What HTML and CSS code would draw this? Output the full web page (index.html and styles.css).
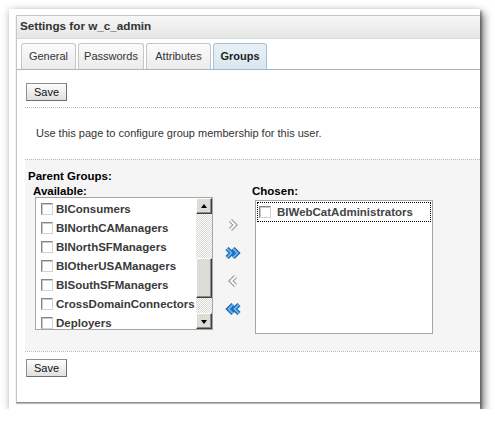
FILE: index.html
```html
<!DOCTYPE html>
<html>
<head>
<meta charset="utf-8">
<title>Settings for w_c_admin</title>
<link rel="stylesheet" href="styles.css">
</head>
<body>
<div class="frame">
  <div class="panel">
    <div class="header">Settings for w_c_admin</div>
    <div class="tabbar">
      <div class="tab tab-general">General</div>
      <div class="tab tab-passwords">Passwords</div>
      <div class="tab tab-attributes">Attributes</div>
      <div class="tab tab-groups selected">Groups</div>
    </div>
    <div class="content">
      <div class="toolbar"><button class="btn">Save</button></div>
      <div class="info">Use this page to configure group membership for this user.</div>
      <div class="groups">
        <div class="section-label">Parent Groups:</div>
        <div class="shuttle">
          <div class="col col-avail">
            <div class="col-label">Available:</div>
            <div class="listbox avail">
              <div class="items">
                <div class="item"><span class="cb"></span>BIConsumers</div>
                <div class="item"><span class="cb"></span>BINorthCAManagers</div>
                <div class="item"><span class="cb"></span>BINorthSFManagers</div>
                <div class="item"><span class="cb"></span>BIOtherUSAManagers</div>
                <div class="item"><span class="cb"></span>BISouthSFManagers</div>
                <div class="item"><span class="cb"></span>CrossDomainConnectors</div>
                <div class="item"><span class="cb"></span>Deployers</div>
              </div>
              <div class="scrollbar">
                <div class="sb-btn"><span class="tri-up"></span></div>
                <div class="sb-track"><div class="sb-thumb"></div></div>
                <div class="sb-btn"><span class="tri-down"></span></div>
              </div>
            </div>
          </div>
          <div class="arrows">
            <svg class="arrow" width="12" height="14" viewBox="0 0 12 14">
              <polyline points="3.5,2.5 8,7 3.5,11.5" fill="none" stroke="#9c9c9c" stroke-width="4.2"/>
              <polyline points="3.5,2.5 8,7 3.5,11.5" fill="none" stroke="#ffffff" stroke-width="1.8"/>
            </svg>
            <svg class="arrow" width="18" height="14" viewBox="0 0 18 14">
              <polyline points="3,2.5 7.5,7 3,11.5" fill="none" stroke="#1d5ea6" stroke-width="4.4"/>
              <polyline points="3,2.5 7.5,7 3,11.5" fill="none" stroke="#5fb4f6" stroke-width="2"/>
              <polyline points="9,2.5 13.5,7 9,11.5" fill="none" stroke="#1d5ea6" stroke-width="4.4"/>
              <polyline points="9,2.5 13.5,7 9,11.5" fill="none" stroke="#5fb4f6" stroke-width="2"/>
            </svg>
            <svg class="arrow" width="12" height="14" viewBox="0 0 12 14">
              <polyline points="8.5,2.5 4,7 8.5,11.5" fill="none" stroke="#9c9c9c" stroke-width="4.2"/>
              <polyline points="8.5,2.5 4,7 8.5,11.5" fill="none" stroke="#ffffff" stroke-width="1.8"/>
            </svg>
            <svg class="arrow" width="18" height="14" viewBox="0 0 18 14">
              <polyline points="15,2.5 10.5,7 15,11.5" fill="none" stroke="#1d5ea6" stroke-width="4.4"/>
              <polyline points="15,2.5 10.5,7 15,11.5" fill="none" stroke="#5fb4f6" stroke-width="2"/>
              <polyline points="9,2.5 4.5,7 9,11.5" fill="none" stroke="#1d5ea6" stroke-width="4.4"/>
              <polyline points="9,2.5 4.5,7 9,11.5" fill="none" stroke="#5fb4f6" stroke-width="2"/>
            </svg>
          </div>
          <div class="col col-chosen">
            <div class="col-label">Chosen:</div>
            <div class="listbox chosen">
              <div class="item focused"><span class="cb"></span>BIWebCatAdministrators</div>
            </div>
          </div>
        </div>
      </div>
      <div class="footer"><button class="btn">Save</button></div>
    </div>
  </div>
</div>
</body>
</html>
```

FILE: styles.css
```css
html, body {
  margin: 0;
  padding: 0;
  background: #ffffff;
}

body {
  font-family: "Liberation Sans", Arial, sans-serif;
  font-size: 11px;
  color: #333333;
}

.frame {
  margin: 9px 0 0 9px;
  width: 471px;
  height: 400px;
  box-sizing: border-box;
  padding: 6px 0 0 7px;
  background: #ffffff;
  overflow: hidden;
  box-shadow: 2px 2px 2px rgba(0, 0, 0, 0.3), 4px 4px 8px rgba(0, 0, 0, 0.5), -1px 0 7px rgba(0, 0, 0, 0.12);
}

.panel {
  width: 480px;
  height: 388px;
  box-sizing: border-box;
  border: 1px solid #c6c6c6;
  border-right: none;
  border-bottom-color: #8a8a8a;
  box-shadow: 0 1px 1px rgba(0, 0, 0, 0.25);
  background: #ffffff;
}

.header {
  height: 23px;
  box-sizing: border-box;
  padding-left: 3px;
  line-height: 20px;
  font-size: 11.7px;
  font-weight: bold;
  color: #333333;
  background: linear-gradient(#f7f7f7, #e4e6e4);
  border-bottom: 1px solid #d6d8d6;
}

.tabbar {
  display: flex;
  gap: 2px;
  padding: 4px 0 0 4px;
  border-bottom: 1px solid #a5b7c7;
}

.tab {
  box-sizing: border-box;
  height: 26px;
  padding: 5px 0 6px;
  line-height: 14px;
  text-align: center;
  border: 1px solid #c6c6c6;
  border-bottom: none;
  border-radius: 3px 3px 0 0;
  background: linear-gradient(#fbfbfb, #ebebeb);
  color: #333333;
}

.tab-general { width: 55px; }
.tab-passwords { width: 66px; }
.tab-attributes { width: 65px; }
.tab-groups { width: 54px; }

.tab.selected {
  font-weight: bold;
  background: linear-gradient(#e8f0f6, #d9e6f0);
  border-color: #a9c1d6;
  color: #222222;
}

.content {
  padding: 13px 0 0 8px;
}

.btn {
  display: block;
  width: 41px;
  height: 18px;
  margin: 0 0 0 1px;
  padding: 0;
  font-family: "Liberation Sans", Arial, sans-serif;
  font-size: 11px;
  line-height: 16px;
  color: #111111;
  background: linear-gradient(#fdfdfd, #e0e0e0);
  border: 1px solid #8f8f8f;
  border-right-color: #6f6f6f;
  border-bottom-color: #6f6f6f;
  border-radius: 0;
}

.toolbar {
  padding-bottom: 6px;
}

.info {
  border-top: 1px dotted #bdbdbd;
  padding: 19px 0 19px 11px;
  line-height: 13px;
  color: #333333;
}

.groups {
  border-top: 1px dotted #bdbdbd;
  background: #f5f5f5;
  padding: 11px 0 17px 3px;
}

.section-label,
.col-label {
  font-size: 11.5px;
  font-weight: bold;
  line-height: 11px;
  color: #000000;
}

.section-label {
  margin-bottom: 4px;
}

.shuttle {
  display: flex;
  align-items: flex-start;
}

.col-avail {
  margin-left: 5px;
}

.col-avail .listbox {
  margin-left: 2px;
}

.col-chosen .listbox {
  margin-left: 3px;
  margin-top: 3px;
}

.listbox {
  box-sizing: border-box;
  width: 178px;
  background: #ffffff;
  border: 1px solid #a6a6a6;
}

.listbox.avail {
  height: 133px;
  display: flex;
  overflow: hidden;
}

.listbox.chosen {
  height: 134px;
}

.items {
  flex: 1;
  padding-top: 1px;
  overflow: hidden;
}

.item {
  display: flex;
  align-items: center;
  height: 19px;
  padding-left: 5px;
  font-size: 11.5px;
  font-weight: bold;
  color: #3a3a3a;
  white-space: nowrap;
}

.cb {
  flex: none;
  width: 12px;
  height: 12px;
  box-sizing: border-box;
  margin-right: 3px;
  background: #ffffff;
  border: 1px solid;
  border-color: #858585 #d2d2d2 #d2d2d2 #858585;
  box-shadow: inset 1px 1px 0 #cacaca;
}

.item.focused {
  box-sizing: border-box;
  height: 20px;
  margin: 1px 1px 0 1px;
  padding-left: 1px;
  border: 1px dotted #000000;
  color: #444444;
}

.item.focused .cb {
  margin-right: 6px;
}

.scrollbar {
  flex: none;
  width: 16px;
  display: flex;
  flex-direction: column;
  border-left: 1px solid #ffffff;
}

.sb-btn {
  flex: none;
  height: 16px;
  box-sizing: border-box;
  display: flex;
  align-items: center;
  justify-content: center;
  background: #dedcd6;
  border: 1px solid;
  border-color: #ffffff #404040 #404040 #ffffff;
  box-shadow: inset -1px -1px 0 #8a8a8a;
}

.tri-up,
.tri-down {
  width: 0;
  height: 0;
  border-left: 3.5px solid transparent;
  border-right: 3.5px solid transparent;
}

.tri-up {
  border-bottom: 4px solid #000000;
  margin-bottom: 1px;
}

.tri-down {
  border-top: 4px solid #000000;
  margin-top: 1px;
}

.sb-track {
  flex: 1;
  padding-top: 44px;
  background: repeating-conic-gradient(#d8d6d0 0 25%, #ffffff 0 50%) 0 0 / 2px 2px;
}

.sb-thumb {
  height: 40px;
  box-sizing: border-box;
  background: #dedcd6;
  border: 1px solid;
  border-color: #ffffff #404040 #404040 #ffffff;
  box-shadow: inset -1px -1px 0 #8a8a8a;
}

.arrows {
  width: 39px;
  flex: none;
  display: flex;
  flex-direction: column;
  align-items: center;
  gap: 14px;
  padding-top: 32px;
}

.arrow {
  display: block;
}

.footer {
  border-top: 1px dotted #bdbdbd;
  padding-top: 7px;
}
```
